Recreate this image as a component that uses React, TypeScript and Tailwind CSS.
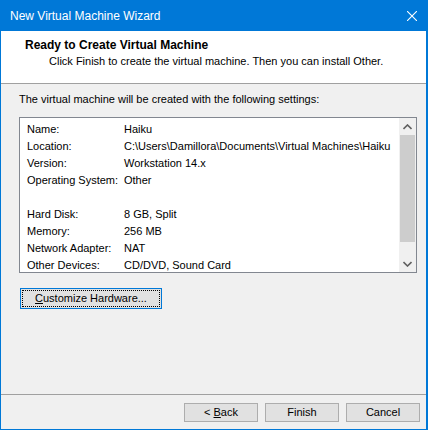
import React from "react"

const rows: [string, string][] = [
  ["Name:", "Haiku"],
  ["Location:", "C:\\Users\\Damillora\\Documents\\Virtual Machines\\Haiku"],
  ["Version:", "Workstation 14.x"],
  ["Operating System:", "Other"],
  ["", ""],
  ["Hard Disk:", "8 GB, Split"],
  ["Memory:", "256 MB"],
  ["Network Adapter:", "NAT"],
  ["Other Devices:", "CD/DVD, Sound Card"],
]

function Chevron({ up }: { up?: boolean }) {
  return (
    <svg width="9" height="6" viewBox="0 0 9 6" className={up ? "" : "rotate-180"}>
      <path d="M0.5 5 L4.5 1 L8.5 5" fill="none" stroke="#606060" strokeWidth="1.6" />
    </svg>
  )
}

function WinButton({ children }: { children: React.ReactNode }) {
  return (
    <button className="h-[19px] w-[74px] bg-[#e1e1e1] border border-[#adadad] text-[11px] leading-none text-black flex items-center justify-center">
      <span>{children}</span>
    </button>
  )
}

export default function App() {
  return (
    <div
      className="w-[428px] h-[430px] bg-[#0078d7] flex flex-col text-black"
      style={{ fontFamily: '"Liberation Sans", Arial, sans-serif' }}
    >
      {/* title bar */}
      <div className="h-[31px] flex items-center justify-between pl-[10px] pr-[11px] text-white text-[12px]">
        <span>New Virtual Machine Wizard</span>
        <svg width="10" height="10" viewBox="0 0 10 10">
          <path d="M0 0 L10 10 M10 0 L0 10" stroke="#fff" strokeWidth="1.1" />
        </svg>
      </div>

      <div className="ml-px mr-[2px] mb-px flex-1 flex flex-col bg-[#f0f0f0]">
        {/* header */}
        <div className="h-[53px] bg-white border-b border-[#a0a0a0] pl-[24px] pt-[6px]">
          <div className="text-[12px] font-bold leading-[16px]">Ready to Create Virtual Machine</div>
          <div className="text-[11px] leading-[16px] pl-[24px]">
            Click Finish to create the virtual machine. Then you can install Other.
          </div>
        </div>

        {/* body */}
        <div className="flex-1 pl-[18px] pt-[7px]">
          <div className="text-[11px] leading-[16px]">
            The virtual machine will be created with the following settings:
          </div>

          <div className="mt-[10px] w-[398px] h-[156px] bg-white border border-[#828790] flex">
            <div className="flex-1 min-w-0 overflow-hidden pt-[3px] pl-[7px] text-[11px]">
              {rows.map(([k, v], i) => (
                <div key={i} className="h-[17px] flex items-center whitespace-nowrap">
                  <span className="w-[97px] shrink-0">{k}</span>
                  <span>{v}</span>
                </div>
              ))}
            </div>
            <div className="w-[17px] shrink-0 bg-[#f0f0f0] flex flex-col">
              <div className="h-[17px] flex items-center justify-center">
                <Chevron up />
              </div>
              <div className="mx-px h-[107px] bg-[#cdcdcd]" />
              <div className="flex-1" />
              <div className="h-[17px] flex items-center justify-center">
                <Chevron />
              </div>
            </div>
          </div>

          <div className="mt-[15px] ml-px w-[142px] h-[21px] bg-[#e1e1e1] border border-[#0078d7] p-px">
            <div className="h-full w-full border border-dotted border-black flex items-center justify-center text-[11px] leading-none">
              <span>
                <span className="underline">C</span>ustomize Hardware...
              </span>
            </div>
          </div>
        </div>

        {/* footer */}
        <div className="h-[35px] border-t border-[#a0a0a0] pt-[8px] pr-[6px] flex justify-end gap-[7px]">
          <WinButton>
            &lt; <span className="underline">B</span>ack
          </WinButton>
          <WinButton>Finish</WinButton>
          <WinButton>Cancel</WinButton>
        </div>
      </div>
    </div>
  )
}
